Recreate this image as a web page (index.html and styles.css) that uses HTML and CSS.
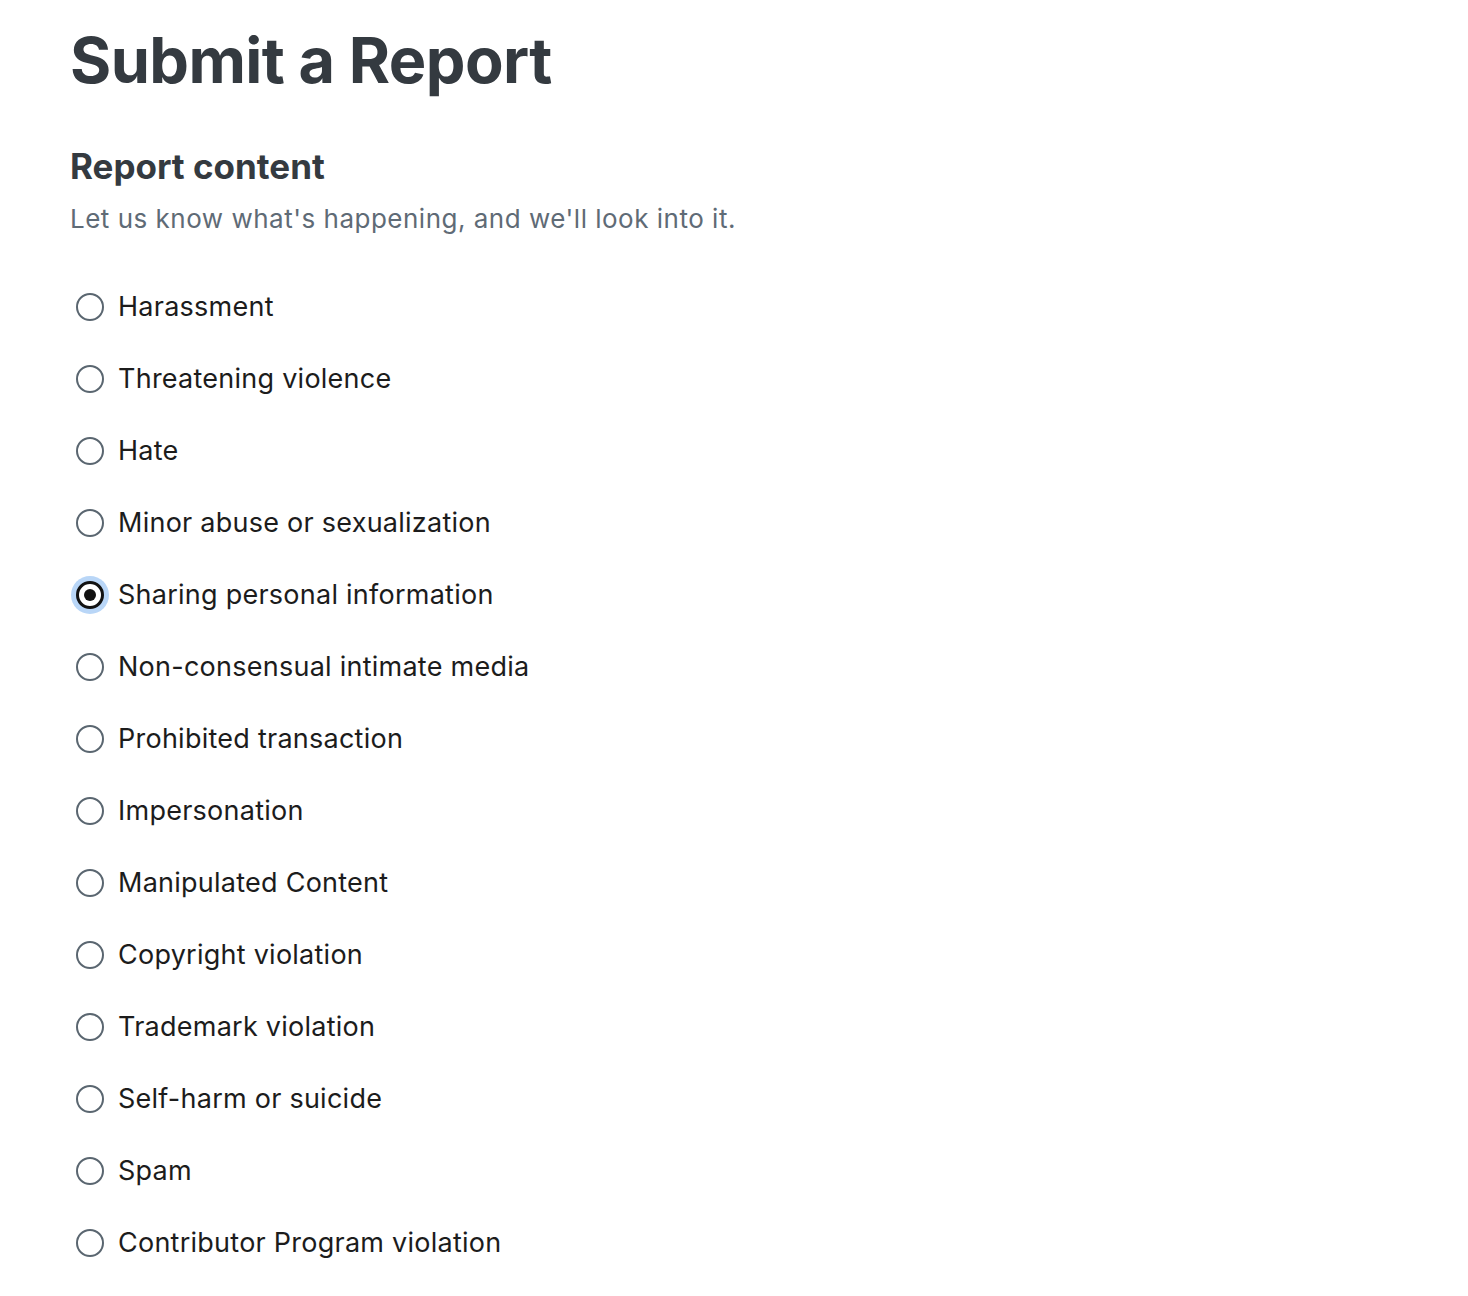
FILE: index.html
```html
<!DOCTYPE html>
<html lang="en">
<head>
<meta charset="utf-8">
<title>Submit a Report</title>
<link rel="stylesheet" href="styles.css">
</head>
<body>
<main class="page">
  <h1 class="title">Submit a Report</h1>
  <section class="section">
    <h2 class="section-title">Report content</h2>
    <p class="section-desc">Let us know what's happening, and we'll look into it.</p>
    <div class="options">
      <label class="option"><span class="radio"></span><span class="label">Harassment</span></label>
      <label class="option"><span class="radio"></span><span class="label">Threatening violence</span></label>
      <label class="option"><span class="radio"></span><span class="label">Hate</span></label>
      <label class="option"><span class="radio"></span><span class="label">Minor abuse or sexualization</span></label>
      <label class="option"><span class="radio checked"></span><span class="label">Sharing personal information</span></label>
      <label class="option"><span class="radio"></span><span class="label">Non-consensual intimate media</span></label>
      <label class="option"><span class="radio"></span><span class="label">Prohibited transaction</span></label>
      <label class="option"><span class="radio"></span><span class="label">Impersonation</span></label>
      <label class="option"><span class="radio"></span><span class="label">Manipulated Content</span></label>
      <label class="option"><span class="radio"></span><span class="label">Copyright violation</span></label>
      <label class="option"><span class="radio"></span><span class="label">Trademark violation</span></label>
      <label class="option"><span class="radio"></span><span class="label">Self-harm or suicide</span></label>
      <label class="option"><span class="radio"></span><span class="label">Spam</span></label>
      <label class="option"><span class="radio"></span><span class="label">Contributor Program violation</span></label>
    </div>
  </section>
</main>
</body>
</html>
```
FILE: styles.css
```css
html, body {
  margin: 0;
  padding: 0;
  background: #ffffff;
}
body {
  font-family: Inter, "Noto Sans", "Liberation Sans", sans-serif;
  color: #1c1c1c;
}
.page {
  padding: 20px 0 0 70px;
}
.title {
  margin: 0;
  font-size: 63px;
  font-weight: 700;
  line-height: 80px;
  color: #343a40;
  letter-spacing: -0.6px;
}
.section {
  margin-top: 44px;
}
.section-title {
  margin: 0;
  font-size: 35px;
  font-weight: 700;
  line-height: 44px;
  color: #343a40;
}
.section-desc {
  margin: 15px 0 0 0;
  font-size: 26px;
  line-height: 32px;
  letter-spacing: 0.5px;
  color: #5f6b76;
}
.options {
  margin-top: 52px;
  display: flex;
  flex-direction: column;
  gap: 32px;
}
.option {
  display: flex;
  align-items: center;
  gap: 14px;
  height: 40px;
}
.radio {
  box-sizing: border-box;
  width: 28px;
  height: 28px;
  margin-left: 6px;
  border: 2.5px solid #5a6670;
  border-radius: 50%;
  background: #fff;
  position: relative;
  flex: none;
}
.radio.checked {
  border: 3px solid #111;
  box-shadow: 0 0 0 5px #b9d6f7;
}
.radio.checked::after {
  content: "";
  position: absolute;
  left: 50%;
  top: 50%;
  width: 12px;
  height: 12px;
  margin: -6px 0 0 -6px;
  background: #111;
  border-radius: 50%;
}
.label {
  font-size: 27px;
  line-height: 40px;
  letter-spacing: 0.25px;
  color: #1c1c1c;
}
```
